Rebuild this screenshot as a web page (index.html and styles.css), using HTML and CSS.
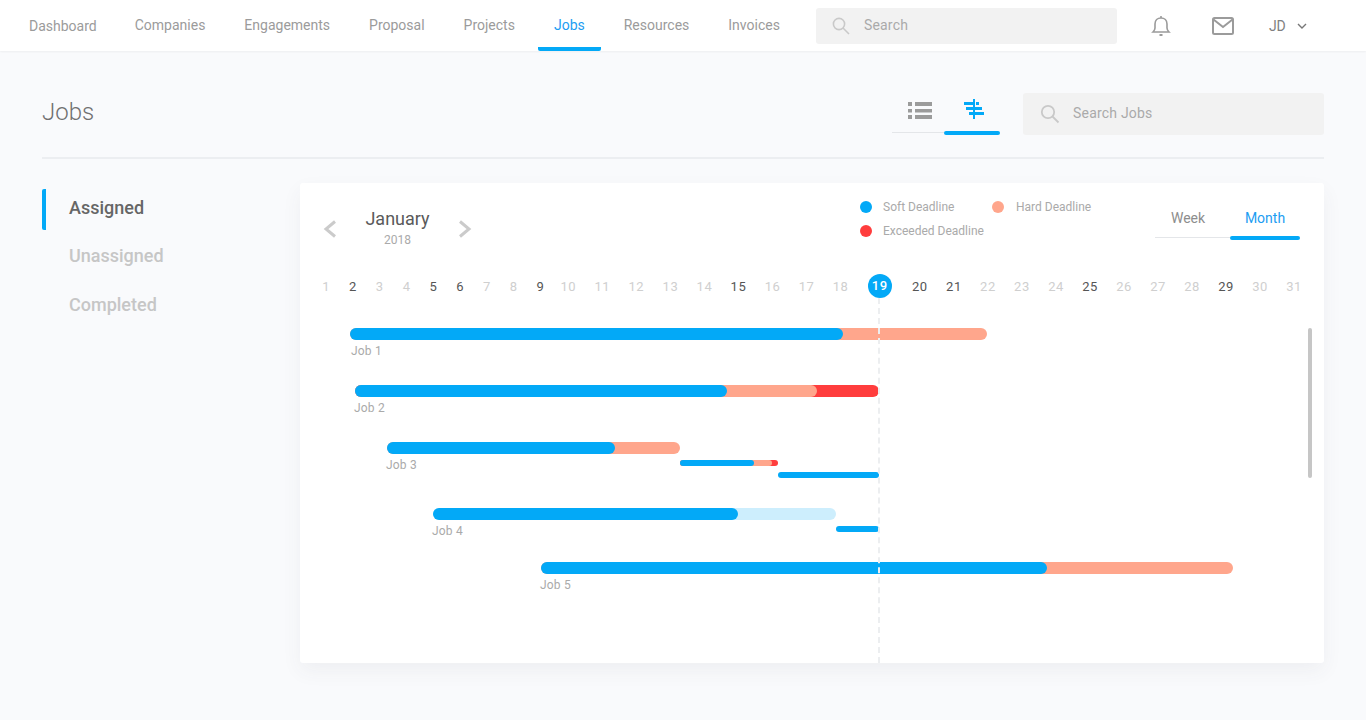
FILE: index.html
```html
<html>
  <head>
    <link rel="stylesheet" href="styles.css">
    <title>Jobs</title>
  </head>
  <body>
    <header class="topbar">
      <nav class="nav">
        <a class="nav-item nav-first">Dashboard</a>
        <a class="nav-item">Companies</a>
        <a class="nav-item">Engagements</a>
        <a class="nav-item">Proposal</a>
        <a class="nav-item">Projects</a>
        <a class="nav-item active">Jobs</a>
        <a class="nav-item">Resources</a>
        <a class="nav-item">Invoices</a>
      </nav>
      <div class="search search-top">
        <svg width="18" height="18" viewBox="0 0 18 18" fill="none" stroke="#c9c9c9" stroke-width="1.6"><circle cx="7" cy="7" r="5.6"/><path d="M11 11l6 6"/></svg>
        <span>Search</span>
      </div>
      <svg class="icon-bell" width="20" height="22" viewBox="0 0 20 22" fill="none" stroke="#9b9b9b" stroke-width="1.6"><path d="M2 17h16c-1.500-1.500-2-2.500-2-4V9c0-3.500-2.500-6-6-6S4 5.500 4 9v4c0 1.500-.5 2.500-2 4z"/><path d="M10 3V1"/><path d="M8.500 20h3" stroke-width="2"/></svg>
      <svg class="icon-mail" width="22" height="18" viewBox="0 0 22 18" fill="none" stroke="#9b9b9b" stroke-width="2"><rect x="1" y="1" width="20" height="16" rx="1.500"/><path d="M1.500 2.500L11 10l9.500-7.500"/></svg>
      <div class="user">
        <span>JD</span>
        <svg width="10" height="6" viewBox="0 0 10 6" fill="none" stroke="#777" stroke-width="1.4"><path d="M1 1l4 4 4-4"/></svg>
      </div>
    </header>

    <main class="page">
      <div class="page-head">
        <h1 class="page-title">Jobs</h1>
        <div class="view-toggle">
          <div class="view-tab">
            <div class="view-icon">
              <svg width="24" height="18" viewBox="0 0 24 18" fill="#9b9b9b"><rect x="0" y="1" width="4" height="4"/><rect x="7" y="1" width="17" height="4"/><rect x="0" y="8" width="4" height="3.500"/><rect x="7" y="8" width="17" height="3.500"/><rect x="0" y="14" width="4" height="4"/><rect x="7" y="14" width="17" height="4"/></svg>
            </div>
            <i class="line"></i>
          </div>
          <div class="view-tab active">
            <div class="view-icon">
              <svg width="22" height="20" viewBox="0 0 22 20" fill="#03a9f7"><rect x="9" y="0" width="2" height="20"/><rect x="0" y="3" width="9" height="3"/><rect x="12" y="3" width="3" height="3"/><rect x="2" y="8" width="7" height="3"/><rect x="11" y="8" width="7" height="3"/><rect x="5" y="13" width="4" height="3"/><rect x="11" y="13" width="9" height="3"/></svg>
            </div>
            <i class="line"></i>
          </div>
        </div>
        <div class="search search-jobs">
          <svg width="20" height="20" viewBox="0 0 20 20" fill="none" stroke="#c9c9c9" stroke-width="1.8"><circle cx="8" cy="8" r="6.200"/><path d="M12.500 12.500l6 6"/></svg>
          <span>Search Jobs</span>
        </div>
      </div>

      <div class="content">
        <aside class="side">
          <a class="side-item active">Assigned</a>
          <a class="side-item">Unassigned</a>
          <a class="side-item">Completed</a>
        </aside>

        <section class="card">
          <div class="card-top">
            <div class="month-nav">
              <svg width="14" height="18" viewBox="0 0 14 18" fill="none" stroke="#cbcbcb" stroke-width="3"><path d="M12 1.500L3 9l9 7.500"/></svg>
              <div class="month">
                <div class="month-name">January</div>
                <div class="month-year">2018</div>
              </div>
              <svg width="14" height="18" viewBox="0 0 14 18" fill="none" stroke="#cbcbcb" stroke-width="3"><path d="M2 1.500L11 9l-9 7.500"/></svg>
            </div>
            <div class="legend">
              <div class="legend-item"><i class="dot soft"></i>Soft Deadline</div>
              <div class="legend-item"><i class="dot hard"></i>Hard Deadline</div>
              <div class="legend-item"><i class="dot over"></i>Exceeded Deadline</div>
            </div>
            <div class="range">
              <div class="range-tab"><span>Week</span><i class="line"></i></div>
              <div class="range-tab active"><span>Month</span><i class="line"></i></div>
            </div>
          </div>

          <div class="dates">
            <span>1</span><span class="on">2</span><span>3</span><span>4</span><span class="on">5</span><span class="on">6</span><span>7</span><span>8</span><span class="on nine">9</span><span>10</span><span>11</span><span>12</span><span>13</span><span>14</span><span class="on">15</span><span>16</span><span>17</span><span>18</span><span class="today">19</span><span class="on">20</span><span class="on">21</span><span>22</span><span>23</span><span>24</span><span class="on">25</span><span>26</span><span>27</span><span>28</span><span class="on">29</span><span>30</span><span>31</span>
          </div>

          <div class="gantt">
            <div class="bar hard" style="left:50px;top:30px;width:637px"><div class="seg soft" style="width:493px"></div></div>
            <div class="job-label" style="left:51px;top:45px">Job 1</div>

            <div class="bar over" style="left:55px;top:87px;width:524px"><div class="seg hard" style="width:462px"><div class="seg soft" style="width:372px"></div></div></div>
            <div class="job-label" style="left:54px;top:102px">Job 2</div>

            <div class="bar hard" style="left:87px;top:144px;width:293px"><div class="seg soft" style="width:228px"></div></div>
            <div class="job-label" style="left:86px;top:159px">Job 3</div>
            <div class="bar thin over" style="left:380px;top:162px;width:98px"><div class="seg hard" style="width:92px"><div class="seg soft" style="width:74px"></div></div></div>
            <div class="bar thin soft" style="left:478px;top:174px;width:101px"></div>

            <div class="bar pale" style="left:133px;top:210px;width:403px"><div class="seg soft" style="width:305px"></div></div>
            <div class="job-label" style="left:132px;top:225px">Job 4</div>
            <div class="bar thin soft" style="left:536px;top:228px;width:43px"></div>

            <div class="bar hard" style="left:241px;top:264px;width:692px"><div class="seg soft" style="width:506px"></div></div>
            <div class="job-label" style="left:240px;top:279px">Job 5</div>

            <div class="today-line"></div>
            <div class="scroll-thumb"></div>
          </div>
        </section>
      </div>
    </main>
  </body>
</html>
```
FILE: styles.css
```css
* {
  box-sizing: border-box;
}
body {
  margin: 0;
  background-color: #f9fafc;
  font-family: Roboto, sans-serif;
  height: 720px;
  overflow: hidden;
}

.topbar {
  height: 51px;
  background-color: #fff;
  box-shadow: 0 1px 2px rgba(0, 0, 0, 0.05);
  display: flex;
  align-items: center;
  padding-left: 13px;
}
.nav {
  display: flex;
  gap: 7px;
  height: 51px;
}
.nav-item {
  padding: 0 16px;
  height: 51px;
  line-height: 50px;
  font-size: 14px;
  color: #9b9b9b;
  white-space: nowrap;
}
.nav-first {
  line-height: 53px;
  margin-right: -1px;
}
.nav-item.active {
  color: #1c9df2;
  border-bottom: 4px solid #03a9f7;
  border-radius: 2px;
}

.search {
  background-color: #f2f2f2;
  border-radius: 3px;
  display: flex;
  align-items: center;
  color: #aaa;
  font-size: 14px;
  letter-spacing: 0.2px;
}
.search span {
  padding-bottom: 2px;
}
.search-top {
  width: 301px;
  height: 36px;
  margin-left: 20px;
  padding-left: 16px;
  gap: 14px;
}
.icon-bell {
  margin-left: 34px;
}
.icon-mail {
  margin-left: 41px;
}
.user {
  display: flex;
  align-items: center;
  margin-left: 35px;
  gap: 11px;
  color: #808080;
  font-size: 14px;
}

.page {
  padding: 42px 42px 0 42px;
}
.page-head {
  display: flex;
  height: 66px;
  padding-bottom: 23px;
  border-bottom: 2px solid #eceef1;
}
.page-title {
  margin: 0;
  font-size: 24px;
  font-weight: 300;
  line-height: 38px;
  color: #707070;
  flex: 1;
}
.view-toggle {
  display: flex;
  margin-right: 23px;
}
.view-tab {
  width: 52px;
}
.view-tab.active {
  width: 56px;
}
.view-icon {
  height: 38px;
  padding-top: 8px;
  padding-left: 4px;
  display: flex;
  justify-content: center;
}
.view-tab.active .view-icon {
  padding-top: 6px;
  padding-left: 6px;
}
.line {
  display: block;
  height: 1px;
  background-color: #e4e6e9;
}
.view-tab .line {
  margin-top: 1px;
}
.view-tab.active .line,
.range-tab.active .line {
  height: 4px;
  background-color: #03a9f7;
  border-radius: 2px;
}
.view-tab.active .line {
  margin-top: 0;
}
.search-jobs {
  width: 301px;
  height: 42px;
  padding-left: 17px;
  gap: 13px;
}

.content {
  display: flex;
  margin-top: 24px;
}
.side {
  width: 258px;
  padding-top: 6px;
}
.side-item {
  display: block;
  height: 41px;
  line-height: 38px;
  margin-bottom: 8px;
  padding-left: 23px;
  border-left: 4px solid transparent;
  border-radius: 2px;
  font-size: 18px;
  font-weight: 500;
  color: #c6c6c6;
}
.side-item.active {
  color: #666;
  border-left-color: #03a9f7;
  margin-bottom: 7px;
}

.card {
  width: 1024px;
  height: 480px;
  background-color: #fff;
  border-radius: 3px;
  box-shadow: 0 8px 20px rgba(60, 70, 90, 0.06);
  display: flex;
  flex-direction: column;
}
.card-top {
  height: 91px;
  padding: 12px 24px 0 23px;
  display: flex;
  align-items: flex-start;
}
.month-nav {
  display: flex;
  align-items: center;
  height: 68px;
  width: 149px;
  justify-content: space-between;
}
.month {
  text-align: center;
  margin-top: -2px;
}
.month-name {
  font-size: 18px;
  line-height: 24px;
  color: #5a5a5a;
}
.month-year {
  font-size: 12px;
  line-height: 18px;
  color: #aaa;
}
.legend {
  display: grid;
  grid-template-columns: 132px auto;
  margin-left: 388px;
  width: 240px;
}
.legend-item {
  display: flex;
  align-items: center;
  height: 24px;
  font-size: 12px;
  color: #aaa;
  white-space: nowrap;
}
.dot {
  width: 12px;
  height: 12px;
  border-radius: 50%;
  margin-right: 11px;
}
.legend-item .hard {
  margin-right: 12px;
}
.soft {
  background-color: #03a9f7;
}
.hard {
  background-color: #ffa68c;
}
.over {
  background-color: #ff3d3d;
}
.pale {
  background-color: #cdeefd;
}
.range {
  display: flex;
  margin-left: auto;
  padding-top: 11px;
}
.range-tab {
  width: 75px;
  padding: 0 9px 0 0;
  font-size: 14px;
  color: #8d8d8d;
  text-align: center;
}
.range-tab .line {
  margin-right: -9px;
}
.range-tab.active {
  width: 70px;
  padding-right: 0;
  color: #1c9df2;
}
.range-tab span {
  display: block;
  line-height: 24px;
  height: 30px;
}
.range-tab .line {
  margin-top: 1px;
}
.range-tab.active .line {
  margin-top: 0;
  margin-right: 0;
}

.dates {
  height: 24px;
  padding: 0 22px;
  display: flex;
  justify-content: space-between;
  align-items: center;
  font-size: 13px;
  letter-spacing: 0.5px;
  color: #cfcfcf;
}
.dates span {
  min-width: 8.4px;
  text-align: center;
}
.dates .nine {
  margin-right: -2.5px;
}
.dates .on {
  color: #555;
}
.dates .today {
  width: 24px;
  height: 24px;
  line-height: 24px;
  margin: 0 2px 0 1px;
  border-radius: 50%;
  background-color: #03a9f7;
  color: #fff;
  font-weight: 500;
}

.gantt {
  position: relative;
  flex: 1;
}
.bar {
  position: absolute;
  height: 12px;
  border-radius: 6px;
}
.bar.thin {
  height: 6px;
  border-radius: 3px;
}
.seg {
  height: 100%;
  border-radius: inherit;
}
.job-label {
  position: absolute;
  font-size: 12px;
  line-height: 16px;
  letter-spacing: 0.2px;
  color: #aaa;
}
.today-line {
  position: absolute;
  left: 578px;
  top: 0;
  bottom: 0;
  border-left: 2px dashed #eceef0;
}
.scroll-thumb {
  position: absolute;
  left: 1008px;
  top: 30px;
  width: 4px;
  height: 150px;
  background-color: #c6c6c6;
  border-radius: 2px;
}
```
